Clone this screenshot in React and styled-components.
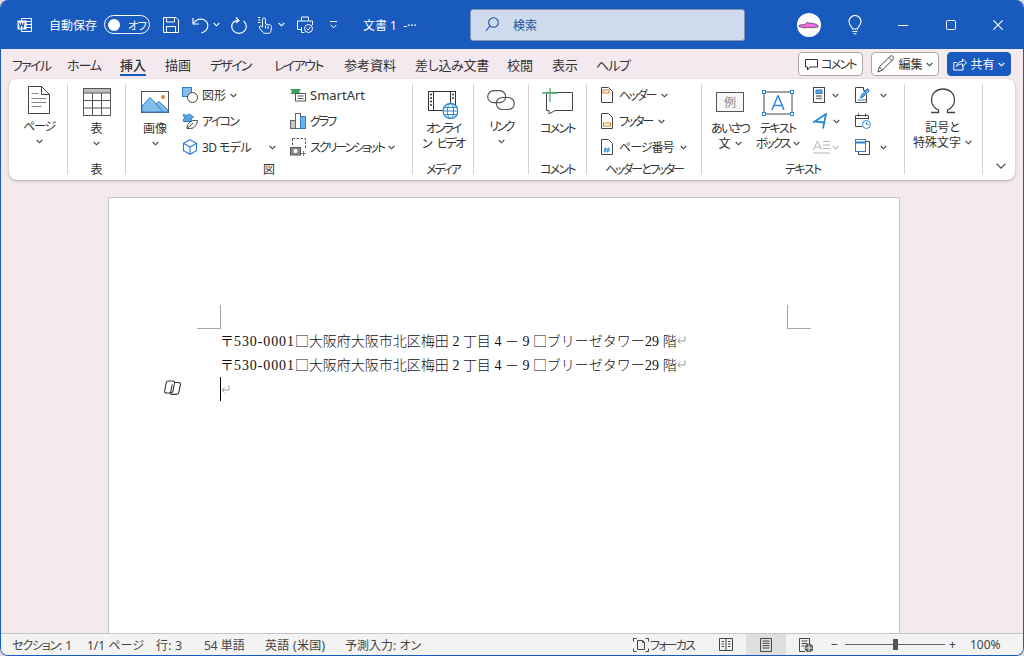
import React from "react";
import styled, { createGlobalStyle } from "styled-components";

const Global = createGlobalStyle`
  html, body { margin: 0; padding: 0; background: #dcdcdc; }
  * { box-sizing: border-box; }
  body {
    font-family: "Noto Sans", "Noto Sans CJK JP", sans-serif;
    font-feature-settings: "palt";
    overflow: hidden;
  }
`;

const Win = styled.div`
  width: 1024px;
  height: 656px;
  border: 1px solid #185abd;
  border-top: 0;
  border-radius: 8px;
  overflow: hidden;
  display: flex;
  flex-direction: column;
  background: #f3e9ef;
`;

const TitleBar = styled.div`
  height: 49px;
  flex: none;
  background: #185abd;
  color: #fff;
  display: flex;
  align-items: center;
  font-size: 12px;
`;
const Slot = styled.div`
  margin-left: ${p => p.$ml || 0}px;
  width: ${p => (p.$w ? p.$w + "px" : "auto")};
  flex: none;
  display: flex;
  align-items: center;
  white-space: nowrap;
  color: #fff;
`;
const Toggle = styled.div`
  width: 46px;
  height: 19px;
  border: 1px solid #fff;
  border-radius: 10px;
  display: flex;
  align-items: center;
  gap: 8px;
  padding-left: 3px;
  font-size: 11px;
  letter-spacing: -0.5px;
  &::before {
    content: "";
    width: 12px;
    height: 12px;
    border-radius: 50%;
    background: #fff;
  }
`;
const SearchBox = styled.div`
  width: 275px;
  height: 32px;
  background: #cfdbec;
  border: 1px solid #8295ad;
  border-radius: 3px;
  display: flex;
  align-items: center;
  gap: 14px;
  padding-left: 14px;
  color: #1c4f9e;
  font-size: 12px;
  flex: none;
`;

const TabRow = styled.div`
  height: 30px;
  flex: none;
  display: flex;
  align-items: flex-start;
  padding: 3px 12px 0 11px;
`;
const Tab = styled.div`
  position: relative;
  width: ${p => p.$w}px;
  flex: none;
  font-size: 13px;
  color: #333;
  margin-right: ${p => p.$mr ?? 19}px;
  letter-spacing: ${p => p.$ls || 0}px;
  white-space: nowrap;
  height: 26px;
  line-height: 26px;
  font-weight: ${p => (p.$active ? 500 : 400)};
  &::after {
    content: "";
    display: ${p => (p.$active ? "block" : "none")};
    position: absolute;
    left: 0;
    right: 0;
    bottom: 2px;
    height: 2px;
    background: #185abd;
  }
`;
const TabActions = styled.div`
  margin-left: auto;
  display: flex;
  align-items: center;
  gap: 8px;
`;
const ActionBtn = styled.div`
  height: 24px;
  width: ${p => p.$w}px;
  border: 1px solid ${p => (p.$primary ? "#185abd" : "#a8a8a8")};
  background: ${p => (p.$primary ? "#185abd" : "#fff")};
  color: ${p => (p.$primary ? "#fff" : "#333")};
  border-radius: 4px;
  font-size: 12px;
  display: flex;
  align-items: center;
  justify-content: center;
  gap: 3px;
`;
const K = styled.span`
  letter-spacing: ${p => p.$ls ?? -1.8}px;
  word-spacing: ${p => p.$ws || 0}px;
  font-size: ${p => (p.$fs ? p.$fs + "px" : "inherit")};
`;

const Ribbon = styled.div`
  height: 101px;
  flex: none;
  margin: 0 8px;
  background: #fff;
  border-radius: 8px;
  box-shadow: 0 1px 3px rgba(0, 0, 0, 0.28);
  display: flex;
  padding-top: 5px;
  font-size: 12px;
  color: #333;
`;
const Group = styled.div`
  width: ${p => p.$w}px;
  height: 96px;
  flex: none;
  display: flex;
  flex-direction: column;
`;
const GroupBody = styled.div`
  flex: 1;
  display: flex;
  padding-left: ${p => p.$pl || 0}px;
`;
const GroupLabel = styled.div`
  height: 18px;
  margin-bottom: 1px;
  line-height: 18px;
  font-size: 12px;
  text-align: center;
  color: #333;
  white-space: nowrap;
`;
const Sep = styled.div`
  width: 1px;
  height: 90px;
  flex: none;
  background: #d2d2d2;
`;
const BigBtn = styled.div`
  width: ${p => (p.$w ? p.$w + "px" : "100%")};
  flex: none;
  display: flex;
  flex-direction: column;
  align-items: center;
  padding-top: ${p => p.$top || 0}px;
`;
const IconBox = styled.div`
  height: ${p => p.$h}px;
  display: flex;
  align-items: flex-start;
  justify-content: center;
  flex: none;
`;
const BigLabel = styled.div`
  line-height: 15px;
  font-size: 12px;
  text-align: center;
  white-space: nowrap;
  display: flex;
  flex-direction: column;
  align-items: center;
`;
const LabelLine = styled.span`
  display: flex;
  align-items: center;
  gap: 4px;
`;
const ChevBox = styled.div`
  height: 14px;
  display: flex;
  align-items: center;
`;
const SmallCol = styled.div`
  width: ${p => p.$w}px;
  flex: none;
  display: flex;
  flex-direction: column;
  margin-left: ${p => p.$ml || 0}px;
  margin-top: -2px;
`;
const SmallRow = styled.div`
  height: 26px;
  display: flex;
  align-items: center;
  gap: ${p => p.$gap ?? 4}px;
  white-space: nowrap;
  color: ${p => (p.$off ? "#b5b5b5" : "#333")};
`;
const Push = styled.div`
  margin-left: auto;
  margin-right: ${p => p.$mr || 0}px;
  display: flex;
`;
const Collapse = styled.div`
  flex: 1;
  display: flex;
  align-items: flex-end;
  justify-content: center;
  padding-bottom: 5px;
  padding-left: 4px;
  height: 90px;
`;

const DocArea = styled.div`
  flex: 1;
  min-height: 0;
  display: flex;
  padding: 17px 0 0 107px;
  overflow: hidden;
`;
const Page = styled.div`
  position: relative;
  width: 792px;
  height: 440px;
  flex: none;
  background: #fff;
  border: 1px solid #c6c6c6;
  border-bottom: 0;
  padding: 107px 87px 0;
`;
const CropRow = styled.div`
  display: flex;
  justify-content: space-between;
  padding: 0 1px;
`;
const Crop = styled.div`
  width: 24px;
  height: 24px;
  border-bottom: 1px solid #a6a6a6;
  ${p => (p.$right ? "border-left: 1px solid #a6a6a6;" : "border-right: 1px solid #a6a6a6;")}
`;
const Lines = styled.div`
  padding-left: 24px;
`;
const Line = styled.div`
  height: 24px;
  padding-bottom: ${p => (p.$caret ? 0 : 2)}px;
  display: flex;
  align-items: center;
  font-family: "Liberation Serif", "Noto Sans CJK JP", serif;
  font-size: 14px;
  font-weight: 300;
  font-feature-settings: normal;
  color: #111;
  white-space: pre;
`;
const Zen = styled.span`
  font-family: "Noto Sans CJK JP", sans-serif;
  font-weight: 300;
`;
const Num = styled.span`
  letter-spacing: ${p => p.$ls ?? 0.9}px;
`;
const Caret = styled.div`
  width: 1px;
  height: 24px;
  background: #000;
`;
const CopilotMark = styled.div`
  position: absolute;
  left: 55px;
  top: 180px;
`;

const StatusBar = styled.div`
  height: 22px;
  flex: none;
  background: #f3f3f3;
  border-top: 1px solid #c6c6c6;
  display: flex;
  align-items: center;
  font-size: 12px;
  color: #444;
  padding-left: 11px;
`;
const StatusText = styled.span`
  margin-left: ${p => p.$ml || 0}px;
  white-space: nowrap;
  flex: none;
  width: ${p => (p.$w ? p.$w + "px" : "auto")};
  letter-spacing: ${p => p.$ls || 0}px;
`;
const StatusIcon = styled.div`
  margin-left: ${p => p.$ml || 0}px;
  display: flex;
  align-items: center;
  justify-content: center;
  flex: none;
  height: 21px;
  width: ${p => (p.$w ? p.$w + "px" : "auto")};
  background: ${p => (p.$on ? "#dfdfdf" : "transparent")};
`;
const ZoomTrack = styled.div`
  position: relative;
  width: 100px;
  height: 1px;
  margin-left: 7px;
  background: #666;
  flex: none;
  &::after {
    content: "";
    position: absolute;
    left: 48px;
    top: -5px;
    width: 5px;
    height: 11px;
    background: #555;
  }
`;

const G = "#444";
const Chev = ({ c = "#444", s = 7 }) => (
  <svg width={s} height={5} viewBox="0 0 7 5" fill="none" stroke={c} strokeWidth="1.1" style={{ display: "block", flex: "none" }}>
    <path d="M.7 1l2.8 2.8L6.3 1" />
  </svg>
);
const WordLogo = () => (
  <svg width="16" height="16" viewBox="0 0 16 16" fill="none" stroke="#fff" strokeWidth="1">
    <path d="M4.5 1.5h10v13h-10z" />
    <path d="M9 4.5h5.5M9 7.5h5.5M9 10.5h5.5" />
    <rect x="0.5" y="3.5" width="9" height="9" fill="#fff" stroke="none" />
    <path d="M2 5.5l1.2 5 1.4-4 1.4 4 1.2-5" stroke="#185abd" strokeWidth="1.1" />
  </svg>
);
const SaveIcon = () => (
  <svg width="16" height="16" viewBox="0 0 16 16" fill="none" stroke="#fff">
    <path d="M.5.5h12.5l2.5 2.5v12.500H.5z" />
    <path d="M3.5.5v4.500h8V.5M3.500 15.500v-6h9v6" />
  </svg>
);
const UndoIcon = () => (
  <svg width="18" height="18" viewBox="0 0 18 18" fill="none" stroke="#fff" strokeWidth="1.2">
    <path d="M1 2v6h6" />
    <path d="M1.5 7.5C4 3.5 8 2.5 11.5 3.5c4 1.5 5.5 6 3.500 9.500-1.200 2-3 3.300-5.500 4" />
  </svg>
);
const RedoIcon = () => (
  <svg width="16" height="18" viewBox="0 0 16 18" fill="none" stroke="#fff" strokeWidth="1.2">
    <path d="M5 1.5l3 3-3 2.5" />
    <path d="M8 4.300C3.500 4 .7 7.200.7 10.500c0 3.800 3.200 6.800 7.300 6.800s7.300-3 7.300-6.800c0-2.300-1-4.200-2.700-5.500" />
  </svg>
);
const TouchIcon = () => (
  <svg width="16" height="18" viewBox="0 0 16 18" fill="none" stroke="#fff">
    <path d="M5.500 11V3.500a1.500 1.500 0 0 1 3 0V8l4 .8c1.500.4 2.200 1.300 2 2.700l-.7 4c-.2 1-.8 1.800-2 1.800H8c-1 0-1.700-.5-2.300-1.300L2.500 12c-.8-1.500 1-2.500 2-1.500z" />
    <path d="M1 1.500h2.500M1 4h2.500M1 6.500h2.500" />
    <path d="M8.500 9.500v3M11 10v3" />
  </svg>
);
const PrintIcon = () => (
  <svg width="16" height="18" viewBox="0 0 16 18" fill="none" stroke="#fff">
    <path d="M4.500 4.500v-3.500h7v3.500" />
    <path d="M4.500 13.500h-4v-8.500h15v4" />
    <path d="M4.500 11v5.500h3" />
    <circle cx="11.500" cy="12.500" r="4" fill="#185abd" />
    <path d="M9.500 12.500l1.500 1.500 2.500-3" />
  </svg>
);
const MoreIcon = () => (
  <svg width="7" height="8" viewBox="0 0 7 8" fill="none" stroke="#fff">
    <path d="M0 .5h7M.7 4l2.800 2.800L6.300 4" />
  </svg>
);
const SearchIcon = () => (
  <svg width="14" height="15" viewBox="0 0 14 15" fill="none" stroke="#1c4f9e" strokeWidth="1.1">
    <circle cx="8.500" cy="5.500" r="4.800" />
    <path d="M5 9L.8 14" />
  </svg>
);
const Avatar = () => (
  <svg width="24" height="24" viewBox="0 0 24 24">
    <circle cx="12" cy="12" r="12" fill="#fff" />
    <path d="M2 12.500l3-1 2 .4 2-1.200 1-1.400 1.500.6 3.500.4c3 .4 6 1.400 6.500 3-.3.800-2 1.400-5 1.400l-6-.2-3 .6-3-.8-2.500-.8z" fill="#f06ae8" stroke="#222" strokeWidth=".6" />
  </svg>
);
const Bulb = () => (
  <svg width="16" height="20" viewBox="0 0 16 20" fill="none" stroke="#fff" strokeWidth="1.1">
    <path d="M5.500 14c0-2-3.500-3.500-3.500-7.500a6 6 0 0 1 12 0c0 4-3.500 5.500-3.500 7.500z" />
    <path d="M5.500 16.500h5M6.500 18.800h3" />
  </svg>
);
const MinIcon = () => (
  <svg width="10" height="10"><path d="M0 5.500h10" stroke="#fff" /></svg>
);
const MaxIcon = () => (
  <svg width="10" height="10"><rect x=".5" y=".5" width="9" height="9" rx="1" fill="none" stroke="#fff" /></svg>
);
const CloseIcon = () => (
  <svg width="10" height="10"><path d="M.3.3l9.400 9.400M9.700.3L.3 9.700" stroke="#fff" strokeWidth="1.1" /></svg>
);
const CommentSmall = () => (
  <svg width="13" height="13" viewBox="0 0 13 13" fill="none" stroke="#333">
    <path d="M.5 1.500h12v7.500h-7.500l-2.500 3v-3h-2z" />
  </svg>
);
const PenIcon = () => (
  <svg width="18" height="18" viewBox="0 0 18 18" fill="none" stroke="#444">
    <path d="M1 17l1.300-5L13 1.500c1-1 2.300-.9 3 0s.7 2 0 2.800L5.500 15z" />
    <path d="M2.300 12l3.200 3M12 2.500l3.500 3.500" />
  </svg>
);
const ShareIcon = () => (
  <svg width="14" height="14" viewBox="0 0 14 14" fill="none" stroke="#fff">
    <path d="M10 8.500v4.500H.8V5.500h3" />
    <path d="M3.500 9.500c.5-3.500 3-5 6-5V2l4 3.800-4 3.700V7c-2.500 0-4.500.7-6 2.500z" />
  </svg>
);

const PageIcon = () => (
  <svg width="22" height="28" viewBox="0 0 22 28" fill="none" stroke={G}>
    <path d="M.5.5h13l8 8v19H.5z" fill="#fff" />
    <path d="M13.500.5v8h8" />
    <path d="M3.500 7.500h7M3.500 12.500h15M3.500 16.500h15M3.500 20.500h10" stroke="#888" strokeWidth="1.1" />
  </svg>
);
const TableIcon = () => (
  <svg width="28" height="28" viewBox="0 0 28 28" fill="none" stroke="#555">
    <rect x=".5" y=".5" width="27" height="27" fill="#fff" />
    <rect x=".5" y=".5" width="27" height="4.500" fill="#bdbdbd" />
    <path d="M.5 12.500h27M.5 20h27M9.500 5v22.500M18.500 5v22.500" />
  </svg>
);
const PictureIcon = () => (
  <svg width="28" height="22" viewBox="0 0 28 22" fill="none">
    <rect x=".5" y=".5" width="27" height="21" fill="#fff" stroke="#555" />
    <path d="M1 21V15l8-8.500 9 9 2-2 7 7V21z" fill="#83bdea" stroke="#2b7cd3" />
    <path d="M15 13l3-2.500L27 19v2h-5z" fill="#83bdea" stroke="#2b7cd3" />
    <circle cx="22" cy="6" r="2" fill="#e8802a" />
  </svg>
);
const ShapesIcon = () => (
  <svg width="16" height="16" viewBox="0 0 16 16">
    <rect x=".5" y=".5" width="9" height="9" fill="#83bdea" stroke="#2b7cd3" />
    <circle cx="10.500" cy="10.500" r="5" fill="#fff" stroke="#444" />
  </svg>
);
const IconsIcon = () => (
  <svg width="16" height="16" viewBox="0 0 16 16" fill="none" stroke="#444">
    <path d="M5 2.500C6 .5 9 1 9.500 3L11.500 4 9.500 5.500 9 8.500H1.500C1 6.500 2 5 3.500 5 2 4.500 1.500 3 1 1.500 2.500 2 4 2 5 2.500z" fill="#5ba6e0" stroke="#2b7cd3" />
    <path d="M5 15.500c0-4 2.500-7.500 7-8 3 0 3.500 0 3.500 0-.5 4-3 8-7 8zM5 15.500l6-5.500" />
  </svg>
);
const CubeIcon = () => (
  <svg width="16" height="16" viewBox="0 0 16 16" fill="none" stroke="#2b7cd3" strokeWidth="1.1">
    <path d="M8 .7l6.500 3.600v7.400L8 15.300l-6.500-3.600V4.300z" />
    <path d="M1.500 4.300L8 8l6.500-3.700M8 8v7.300" />
  </svg>
);
const SmartArtIcon = () => (
  <svg width="16" height="14" viewBox="0 0 16 14" fill="none">
    <path d="M0 1h11l-2 2.500 2 2.500H0l2-2.500z" fill="#3fa05c" />
    <rect x="5.500" y="5.500" width="10" height="7.500" fill="#fff" stroke="#555" />
    <path d="M7.500 8h6M7.500 10.500h6" stroke="#555" />
  </svg>
);
const ChartIcon = () => (
  <svg width="16" height="16" viewBox="0 0 16 16">
    <rect x=".5" y="7.500" width="5" height="8" fill="#c8c8c8" stroke="#666" />
    <rect x="5.500" y=".5" width="5" height="15" fill="#fff" stroke="#666" />
    <rect x="10.500" y="3.500" width="5" height="12" fill="#6db1e6" stroke="#2b7cd3" />
  </svg>
);
const ShotIcon = () => (
  <svg width="16" height="18" viewBox="0 0 16 18" fill="none" style={{ flex: "none" }}>
    <path d="M2.500.5h13v11" stroke="#555" strokeDasharray="2.500 1.500" />
    <path d="M2.500.5v7" stroke="#555" strokeDasharray="2.500 1.500" />
    <rect x=".5" y="9.500" width="10" height="7.500" fill="#8c8c8c" stroke="#555" />
    <circle cx="5.500" cy="13" r="2" fill="#fff" />
    <path d="M13.500 13v5M11 15.500h5" stroke="#3fa05c" />
  </svg>
);
const VideoIcon = () => (
  <svg width="30" height="28" viewBox="0 0 30 28" fill="none" stroke="#333">
    <rect x=".5" y=".5" width="27" height="19" fill="#fff" />
    <path d="M5.500.5v19M22.500.5v19" />
    <path d="M2 3.500h2M2 7h2M2 10.500h2M2 14h2M24 3.500h2M24 7h2" strokeWidth="1.4" />
    <circle cx="22.500" cy="20" r="7.500" fill="#fff" stroke="#2b87d8" strokeWidth="1.3" />
    <ellipse cx="22.500" cy="20" rx="3.200" ry="7.500" stroke="#2b87d8" />
    <path d="M15 20h15M16.200 16.500h12.600M16.200 23.500h12.600" stroke="#2b87d8" />
  </svg>
);
const LinkIcon = () => (
  <svg width="28" height="21" viewBox="0 0 28 21" fill="none" stroke="#555" strokeWidth="1.2">
    <rect x=".7" y=".7" width="18" height="12" rx="6" />
    <rect x="9.300" y="7.500" width="18" height="12" rx="6" />
  </svg>
);
const CommentBig = () => (
  <svg width="31" height="26" viewBox="0 0 31 26" fill="none">
    <path d="M4.500 4.500h26v18H13l-6 3.500v-3.500H4.500z" stroke="#444" fill="#fff" />
    <path d="M8 0v14M0 5h16" stroke="#4caf6e" strokeWidth="1.3" />
  </svg>
);
const HeaderIcon = ({ kind }) => (
  <svg width="12" height="16" viewBox="0 0 12 16" fill="none" style={{ flex: "none" }}>
    <path d="M.5.5h7l4 4v11H.5z" fill="#fff" stroke="#444" />
    {kind === "top" && <rect x="2" y="3" width="6" height="3" fill="#fff" stroke="#d9801f" />}
    {kind === "bottom" && <rect x="2.500" y="10" width="7" height="3" fill="#fff" stroke="#d9801f" />}
    {kind === "num" && <path d="M4.500 8.500l-1 5M7.500 8.500l-1 5M3 10h6M2.800 12h6" stroke="#2b87d8" />}
  </svg>
);
const GreetIcon = () => (
  <svg width="28" height="20" viewBox="0 0 28 20">
    <rect x=".5" y=".5" width="27" height="19" fill="#f7f7f7" stroke="#555" />
    <text x="14" y="15" fontSize="12" fill="#888" textAnchor="middle" fontFamily="Noto Sans CJK JP">例</text>
  </svg>
);
const TextBoxIcon = () => (
  <svg width="32" height="26" viewBox="0 0 32 26">
    <rect x="2" y="2" width="28" height="22" fill="#fff" stroke="#444" />
    <path d="M16 5.500L10 20M16 5.500L22 20M12 15.500h8" stroke="#2b87d8" strokeWidth="1.5" fill="none" />
    {[[0, 0], [28, 0], [0, 22], [28, 22]].map(([x, y]) => (
      <rect key={x + "-" + y} x={x + 0.5} y={y + 0.5} width="3" height="3" fill="#fff" stroke="#2b87d8" />
    ))}
  </svg>
);
const QuickIcon = () => (
  <svg width="12" height="16" viewBox="0 0 12 16" style={{ flex: "none" }}>
    <rect x=".5" y=".5" width="11" height="15" fill="#fff" stroke="#444" />
    <rect x="3" y="3" width="6" height="3.500" fill="#5ba6e0" stroke="#2b7cd3" />
    <path d="M3 9h6M3 11.500h6" stroke="#777" strokeWidth="1.3" />
  </svg>
);
const WordArtIcon = () => (
  <svg width="14" height="16" viewBox="0 0 14 16" fill="none" stroke="#2b87d8" strokeWidth="1.8" style={{ flex: "none" }}>
    <path d="M0 9.500L13 1 10 15.500M2.500 8.500l8.500 1" />
  </svg>
);
const DropCapIcon = () => (
  <svg width="17" height="14" viewBox="0 0 17 14" fill="none" stroke="#b5b5b5" style={{ flex: "none" }}>
    <path d="M.5 10L4.500 .8 8.500 10M2 7h5" />
    <path d="M10 1.500h7M10 5h7M10 8.500h7M0 13h17" />
  </svg>
);
const SignIcon = () => (
  <svg width="15" height="16" viewBox="0 0 15 16" fill="none" stroke="#444" style={{ flex: "none" }}>
    <path d="M8.500.5H.5v15h11v-8" />
    <path d="M8.500.5v3h3" />
    <path d="M5.500 11l1-3L12.500 1.500l2 2L8 10z" fill="#5ba6e0" stroke="#2b7cd3" />
    <path d="M3 13h8" stroke="#2b7cd3" />
  </svg>
);
const DateIcon = () => (
  <svg width="16" height="16" viewBox="0 0 16 16" fill="none" stroke="#444" style={{ flex: "none" }}>
    <path d="M7 13.500H.5v-11h13v4" />
    <path d="M.5 5.500h13M3.500.5v3M10.500.5v3" />
    <circle cx="11.500" cy="11.500" r="4" fill="#fff" stroke="#2b87d8" />
    <path d="M11.500 9v2.500h2" stroke="#2b87d8" />
  </svg>
);
const ObjectIcon = () => (
  <svg width="15" height="16" viewBox="0 0 15 16" fill="none" style={{ flex: "none" }}>
    <path d="M3.500 2.500h11v13h-11z" stroke="#444" />
    <rect x=".5" y=".5" width="10" height="12" fill="#fff" stroke="#2b7cd3" />
    <path d="M.5 3.500h10" stroke="#2b7cd3" strokeWidth="2" />
  </svg>
);
const OmegaIcon = () => (
  <svg width="26" height="26" viewBox="0 0 26 26" fill="none" stroke="#444" strokeWidth="1.3">
    <path d="M1 24.500h7.500v-2.500C4 20 1.500 16.500 1.500 12 1.500 5.500 6.500 1 13 1s11.500 4.500 11.500 11c0 4.500-2.500 8-7 10v2.500H25" />
  </svg>
);
const ParaMark = () => (
  <svg width="9" height="9" viewBox="0 0 9 9" fill="none" stroke="#999" style={{ flex: "none" }}>
    <path d="M8 .5v4.500H1M3.500 2.500L1 5l2.500 2.500" />
  </svg>
);
const Copilot = () => (
  <svg width="17" height="15" viewBox="0 0 17 15" fill="none" stroke="#333" strokeWidth="1.1">
    <path d="M4 1h5c1.300 0 1.800.8 1.500 2L9 11c-.3 1.200-1 2-2.300 2H2.500C1 13 .4 12 .7 10.700L2.300 2.500C2.500 1.500 3 1 4 1z" />
    <path d="M10 2.500h4.500c1.500 0 2.200.8 1.900 2.200l-1.600 7.700c-.2 1.300-1 2-2.300 2H8c-1.300 0-2-.8-1.800-2" />
    <path d="M6.500 12.800L8.200 4.500" />
  </svg>
);
const FocusIcon = () => (
  <svg width="16" height="14" viewBox="0 0 16 14" fill="none" stroke="#444">
    <path d="M.5 3.500V.5h3M15.500 3.500V.5h-3M.5 10.500v3h3M15.500 10.500v3h-3" />
    <path d="M4.500 2.500h5l2 2v7h-7zM9.500 2.500v2h2" />
  </svg>
);
const ReadIcon = () => (
  <svg width="14" height="13" viewBox="0 0 14 13" fill="none" stroke="#444">
    <path d="M.5.5h13v12H.5zM7 .5v12" />
    <path d="M2.500 3.500h2.500M2.500 6h2.500M2.500 8.500h2.500M9 3.500h2.500M9 6h2.500M9 8.500h2.500" />
  </svg>
);
const PrintView = () => (
  <svg width="12" height="14" viewBox="0 0 12 14" fill="none" stroke="#444">
    <path d="M.5.5h11v13H.5z" />
    <path d="M2.500 3h7M2.500 5.300h7M2.500 7.600h7M2.500 10h7" />
  </svg>
);
const WebView = () => (
  <svg width="14" height="14" viewBox="0 0 14 14" fill="none" stroke="#444">
    <path d="M6 13.500H.5V.5h10v6" />
    <path d="M2.500 3h6M2.500 5.500h6M2.500 8h3" />
    <circle cx="10" cy="10" r="3.800" fill="#666" stroke="#444" />
    <path d="M6.500 10h7M10 6.500v7" stroke="#eee" />
  </svg>
);

const DocLine = () => (
  <Line>
    <span>
      <Zen>〒</Zen><Num>530-0001</Num><Zen>□大阪府大阪市北区梅田</Zen> <Num $ls={0}>2</Num> <Zen>丁目</Zen> <Num $ls={0}>4</Num> <Zen>－</Zen> <Num $ls={0}>9</Num> <Zen>□ブリーゼタワー</Zen><Num $ls={0.2}>29</Num> <Zen>階</Zen>
    </span>
    <ParaMark />
  </Line>
);

export default function App() {
  return (
    <>
      <Global />
      <Win>
        <TitleBar>
          <Slot $ml={16}><WordLogo /></Slot>
          <Slot $ml={16} $w={48}>自動保存</Slot>
          <Slot $ml={7}><Toggle>オフ</Toggle></Slot>
          <Slot $ml={13}><SaveIcon /></Slot>
          <Slot $ml={13}><UndoIcon /></Slot>
          <Slot $ml={3}><Chev c="#fff" /></Slot>
          <Slot $ml={11}><RedoIcon /></Slot>
          <Slot $ml={10}><TouchIcon /></Slot>
          <Slot $ml={5}><Chev c="#fff" /></Slot>
          <Slot $ml={12}><PrintIcon /></Slot>
          <Slot $ml={17}><MoreIcon /></Slot>
          <Slot $ml={26} $w={107}>文書 1 &nbsp;-···</Slot>
          <SearchBox><SearchIcon />検索</SearchBox>
          <Slot $ml={52}><Avatar /></Slot>
          <Slot $ml={26}><Bulb /></Slot>
          <Slot $ml={35}><MinIcon /></Slot>
          <Slot $ml={38}><MaxIcon /></Slot>
          <Slot $ml={37}><CloseIcon /></Slot>
        </TitleBar>

        <TabRow>
          <Tab $w={38} $ls={-1.7} $mr={17}>ファイル</Tab>
          <Tab $w={34} $ls={-1.1}>ホーム</Tab>
          <Tab $w={26} $active>挿入</Tab>
          <Tab $w={26}>描画</Tab>
          <Tab $w={42} $ls={-1.75} $mr={22}>デザイン</Tab>
          <Tab $w={49} $ls={-1.6} $mr={21}>レイアウト</Tab>
          <Tab $w={52}>参考資料</Tab>
          <Tab $w={73} $ls={-0.3}>差し込み文書</Tab>
          <Tab $w={26}>校閲</Tab>
          <Tab $w={26} $mr={18}>表示</Tab>
          <Tab $w={34} $ls={-1.1}>ヘルプ</Tab>
          <TabActions>
            <ActionBtn $w={65}><CommentSmall /><K $ls={-1.75}>コメント</K></ActionBtn>
            <ActionBtn $w={68}><PenIcon />編集<Chev /></ActionBtn>
            <ActionBtn $w={64} $primary><ShareIcon />共有<Chev c="#fff" /></ActionBtn>
          </TabActions>
        </TabRow>

        <Ribbon>
          <Group $w={58}>
            <GroupBody $pl={1}>
              <BigBtn $w={58} $top={2}>
                <IconBox $h={33}><PageIcon /></IconBox>
                <BigLabel><K $ls={-1.2}>ページ</K></BigLabel>
                <ChevBox><Chev /></ChevBox>
              </BigBtn>
            </GroupBody>
            <GroupLabel>&nbsp;</GroupLabel>
          </Group>
          <Sep />
          <Group $w={57}>
            <GroupBody>
              <BigBtn $top={4}>
                <IconBox $h={33}><TableIcon /></IconBox>
                <BigLabel>表</BigLabel>
                <ChevBox><Chev /></ChevBox>
              </BigBtn>
            </GroupBody>
            <GroupLabel>表</GroupLabel>
          </Group>
          <Sep />
          <Group $w={286}>
            <GroupBody $pl={2}>
              <BigBtn $w={54} $top={7}>
                <IconBox $h={30}><PictureIcon /></IconBox>
                <BigLabel>画像</BigLabel>
                <ChevBox><Chev /></ChevBox>
              </BigBtn>
              <SmallCol $w={108}>
                <SmallRow><ShapesIcon />図形<Chev /></SmallRow>
                <SmallRow><IconsIcon /><K $ls={-1.75}>アイコン</K></SmallRow>
                <SmallRow><CubeIcon /><K $ls={-0.6}>3D モデル</K><Push $mr={14}><Chev /></Push></SmallRow>
              </SmallCol>
              <SmallCol $w={115}>
                <SmallRow><SmartArtIcon /><K $ls={0} $fs={13}>SmartArt</K></SmallRow>
                <SmallRow><ChartIcon /><K $ls={-2}>グラフ</K></SmallRow>
                <SmallRow><ShotIcon /><K $ls={-2}>スクリーンショット</K><Chev /></SmallRow>
              </SmallCol>
            </GroupBody>
            <GroupLabel>図</GroupLabel>
          </Group>
          <Sep />
          <Group $w={60}>
            <GroupBody>
              <BigBtn $top={7}>
                <IconBox $h={30}><VideoIcon /></IconBox>
                <BigLabel><K $ls={-2}>オンライ</K><K $ls={-2} $ws={5}>ン&nbsp;ビデオ</K></BigLabel>
              </BigBtn>
            </GroupBody>
            <GroupLabel><K $ls={-1.75}>メディア</K></GroupLabel>
          </Group>
          <Sep />
          <Group $w={54}>
            <GroupBody>
              <BigBtn $top={6}>
                <IconBox $h={29}><LinkIcon /></IconBox>
                <BigLabel><K $ls={-2.5}>リンク</K></BigLabel>
                <ChevBox><Chev /></ChevBox>
              </BigBtn>
            </GroupBody>
            <GroupLabel>&nbsp;</GroupLabel>
          </Group>
          <Sep />
          <Group $w={57}>
            <GroupBody>
              <BigBtn $top={4}>
                <IconBox $h={33}><CommentBig /></IconBox>
                <BigLabel><K $ls={-1.75}>コメント</K></BigLabel>
              </BigBtn>
            </GroupBody>
            <GroupLabel><K $ls={-1.75}>コメント</K></GroupLabel>
          </Group>
          <Sep />
          <Group $w={114}>
            <GroupBody $pl={14}>
              <SmallCol $w={100}>
                <SmallRow $gap={6}><HeaderIcon kind="top" /><K $ls={-2}>ヘッダー</K><Chev /></SmallRow>
                <SmallRow $gap={6}><HeaderIcon kind="bottom" /><K $ls={-2.2}>フッター</K><Chev /></SmallRow>
                <SmallRow $gap={6}><HeaderIcon kind="num" /><K $ls={-1}>ページ番号</K><Chev /></SmallRow>
              </SmallCol>
            </GroupBody>
            <GroupLabel><K $ls={-2.1}>ヘッダーとフッター</K></GroupLabel>
          </Group>
          <Sep />
          <Group $w={202}>
            <GroupBody>
              <BigBtn $w={56} $top={8}>
                <IconBox $h={29}><GreetIcon /></IconBox>
                <BigLabel>
                  <K $ls={-1.75}>あいさつ</K>
                  <LabelLine>文<Chev /></LabelLine>
                </BigLabel>
              </BigBtn>
              <BigBtn $w={40} $top={6}>
                <IconBox $h={31}><TextBoxIcon /></IconBox>
                <BigLabel>
                  <K $ls={-1.5}>テキスト</K>
                  <LabelLine><K $ls={-2.2}>ボックス</K><Chev /></LabelLine>
                </BigLabel>
              </BigBtn>
              <SmallCol $w={42} $ml={15}>
                <SmallRow $gap={7}><QuickIcon /><Chev /></SmallRow>
                <SmallRow $gap={6}><WordArtIcon /><Chev /></SmallRow>
                <SmallRow $gap={2} $off><DropCapIcon /><Chev c="#b5b5b5" /></SmallRow>
              </SmallCol>
              <SmallCol $w={40}>
                <SmallRow><SignIcon /><Push $mr={8}><Chev /></Push></SmallRow>
                <SmallRow><DateIcon /></SmallRow>
                <SmallRow><ObjectIcon /><Push $mr={8}><Chev /></Push></SmallRow>
              </SmallCol>
            </GroupBody>
            <GroupLabel><K $ls={-1.5}>テキスト</K></GroupLabel>
          </Group>
          <Sep />
          <Group $w={77}>
            <GroupBody>
              <BigBtn $w={75} $top={4}>
                <IconBox $h={32}><OmegaIcon /></IconBox>
                <BigLabel>
                  <span>記号と</span>
                  <LabelLine>特殊文字<Chev /></LabelLine>
                </BigLabel>
              </BigBtn>
            </GroupBody>
            <GroupLabel>&nbsp;</GroupLabel>
          </Group>
          <Sep />
          <Collapse>
            <svg width="10" height="6" viewBox="0 0 10 6" fill="none" stroke="#444" strokeWidth="1.1">
              <path d="M.5.7L5 5.2 9.500.7" />
            </svg>
          </Collapse>
        </Ribbon>

        <DocArea>
          <Page>
            <CropRow>
              <Crop />
              <Crop $right />
            </CropRow>
            <Lines>
              <DocLine />
              <DocLine />
              <Line $caret><Caret /><ParaMark /></Line>
            </Lines>
            <CopilotMark><Copilot /></CopilotMark>
          </Page>
        </DocArea>

        <StatusBar>
          <StatusText $w={60}><K $ls={-1.2}>セクション</K>: 1</StatusText>
          <StatusText $ml={15} $w={54}>1/1 ページ</StatusText>
          <StatusText $ml={15} $w={28} $ls={0.3}>行: 3</StatusText>
          <StatusText $ml={20} $w={42}>54 単語</StatusText>
          <StatusText $ml={19} $w={62} $ls={0.3}>英語 (米国)</StatusText>
          <StatusText $ml={18} $w={76}>予測入力: オン</StatusText>
          <StatusIcon $ml={212}><FocusIcon /></StatusIcon>
          <StatusText $ml={1} $w={44} $ls={-1.8}>フォーカス</StatusText>
          <StatusIcon $ml={25}><ReadIcon /></StatusIcon>
          <StatusIcon $ml={13} $w={40} $on><PrintView /></StatusIcon>
          <StatusIcon $ml={13}><WebView /></StatusIcon>
          <StatusText $ml={18} $w={7}>−</StatusText>
          <ZoomTrack />
          <StatusText $ml={4} $w={10}>+</StatusText>
          <StatusText $ml={11}>100%</StatusText>
        </StatusBar>
      </Win>
    </>
  );
}
